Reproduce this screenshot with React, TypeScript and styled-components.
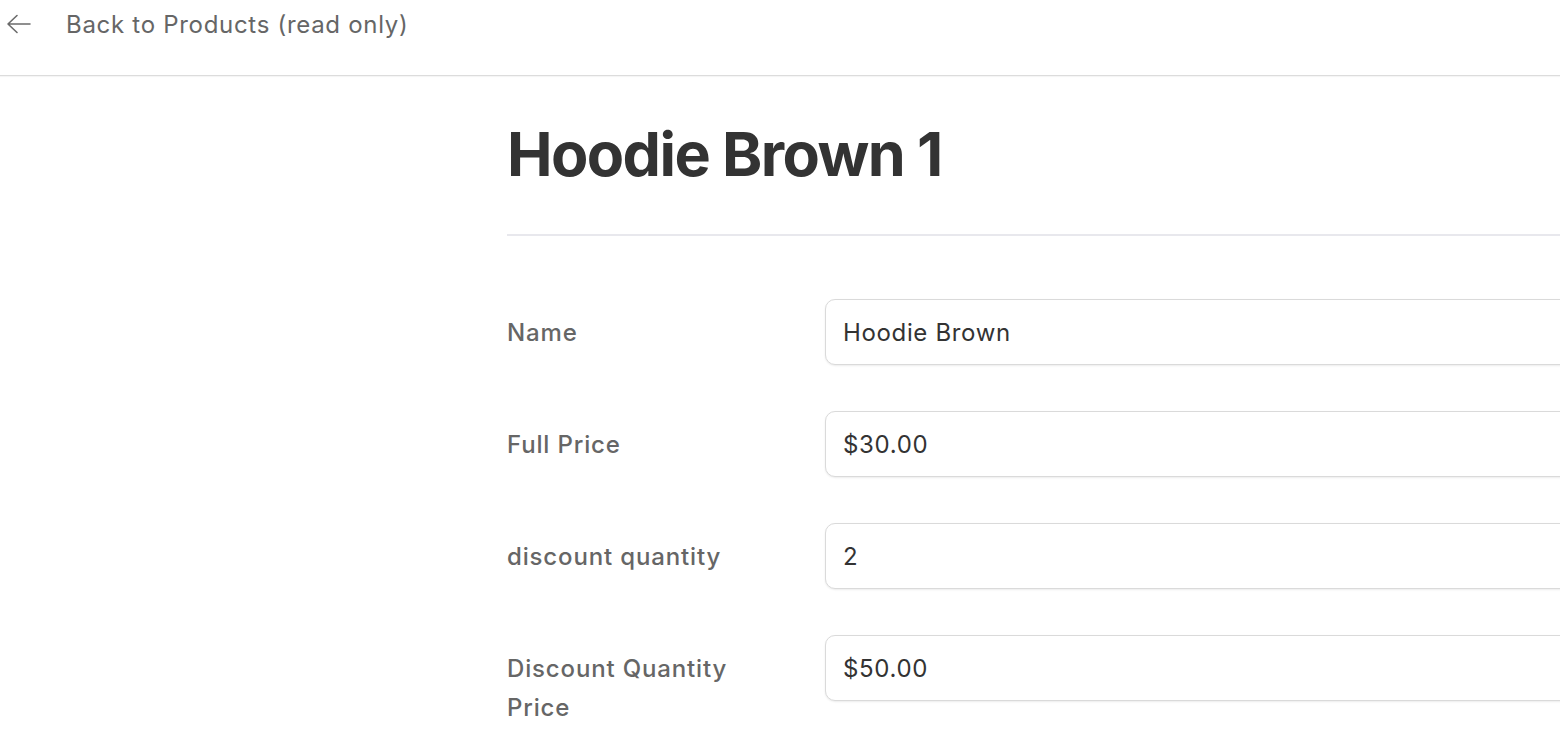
import { FC } from 'react'
import styled, { createGlobalStyle } from 'styled-components'

const GlobalStyle = createGlobalStyle`
  html, body {
    margin: 0;
    padding: 0;
    background: #ffffff;
    overflow: hidden;
  }
  body {
    font-family: Inter, 'Noto Sans', 'Liberation Sans', sans-serif;
    -webkit-font-smoothing: antialiased;
  }
`

const Page = styled.div`
  width: 1560px;
  height: 746px;
  overflow: hidden;
`

const Header = styled.header`
  display: flex;
  align-items: center;
  height: 76px;
  box-sizing: border-box;
  padding: 0 0 2px 6px;
  border-bottom: 1px solid #dcdcdc;
  box-shadow: 0 1px 1px rgba(0, 0, 0, 0.04);
`

const BackLink = styled.a`
  display: flex;
  align-items: center;
  gap: 34px;
  color: #666666;
  font-size: 24px;
  letter-spacing: 0.7px;
  text-decoration: none;
  cursor: pointer;
  margin-top: -25px;
`

const Content = styled.main`
  width: 1240px;
  margin-left: 507px;
  padding-top: 46px;
`

const Title = styled.h1`
  margin: 0;
  font-size: 61px;
  font-weight: 700;
  letter-spacing: -1.6px;
  line-height: 64px;
  color: #333333;
`

const Divider = styled.hr`
  border: none;
  border-top: 2px solid #e8e8ed;
  margin: 48px 0 63px;
`

const Form = styled.div`
  display: flex;
  flex-direction: column;
  gap: 46px;
`

const Row = styled.div`
  display: flex;
  align-items: flex-start;
`

const Label = styled.label`
  width: 318px;
  padding-right: 80px;
  box-sizing: border-box;
  padding-top: 14px;
  font-size: 24px;
  line-height: 39px;
  font-weight: 500;
  letter-spacing: 0.85px;
  color: #666666;
`

const Field = styled.div`
  flex: 1;
  height: 66px;
  box-sizing: border-box;
  display: flex;
  align-items: center;
  padding: 0 17px;
  border: 1px solid #dadada;
  border-radius: 10px;
  box-shadow: 0 1px 2px rgba(0, 0, 0, 0.08);
  font-size: 24px;
  letter-spacing: 0.65px;
  color: #333333;
  background: #ffffff;
`

const ArrowIcon: FC = () => (
  <svg width="26" height="20" viewBox="0 0 26 20" fill="none">
    <path
      d="M24 10H2M11 1.5L2 10l9 8.5"
      stroke="#6b6b6b"
      strokeWidth="1.6"
      strokeLinecap="round"
      strokeLinejoin="round"
    />
  </svg>
)

const fields = [
  { label: 'Name', value: 'Hoodie Brown' },
  { label: 'Full Price', value: '$30.00' },
  { label: 'discount quantity', value: '2' },
  { label: 'Discount Quantity Price', value: '$50.00' },
]

export default function App() {
  return (
    <Page>
      <GlobalStyle />
      <Header>
        <BackLink>
          <ArrowIcon />
          Back to Products (read only)
        </BackLink>
      </Header>
      <Content>
        <Title>Hoodie Brown 1</Title>
        <Divider />
        <Form>
          {fields.map((f) => (
            <Row key={f.label}>
              <Label>{f.label}</Label>
              <Field>{f.value}</Field>
            </Row>
          ))}
        </Form>
      </Content>
    </Page>
  )
}
